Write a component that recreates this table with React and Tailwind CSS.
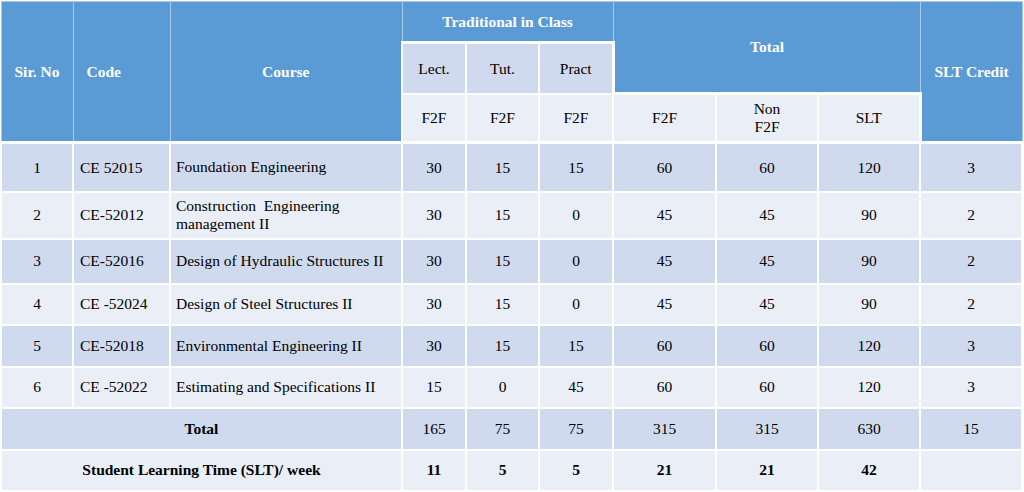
import React from 'react'

const COLS = [72, 97, 232, 64, 73, 74, 103, 102, 102, 102]

const ROWS = [
  { no: 1, code: 'CE 52015', course: 'Foundation Engineering', v: [30, 15, 15, 60, 60, 120, 3], h: 49 },
  { no: 2, code: 'CE-52012', course: ['Construction  Engineering', 'management II'], v: [30, 15, 0, 45, 45, 90, 2], h: 47 },
  { no: 3, code: 'CE-52016', course: 'Design of Hydraulic Structures II', v: [30, 15, 0, 45, 45, 90, 2], h: 45 },
  { no: 4, code: 'CE -52024', course: 'Design of Steel Structures II', v: [30, 15, 0, 45, 45, 90, 2], h: 41 },
  { no: 5, code: 'CE-52018', course: 'Environmental Engineering II', v: [30, 15, 15, 60, 60, 120, 3], h: 42 },
  { no: 6, code: 'CE -52022', course: 'Estimating and Specifications II', v: [15, 0, 45, 60, 60, 120, 3], h: 41 },
]

const dark = 'bg-[#cfdaee]'
const light = 'bg-[#e9eef7]'
const head = 'bg-[#5b9bd5] text-white font-bold'

export default function App() {
  return (
    <div className="w-[1024px] h-[492px] bg-white pt-[1px] text-[15.5px] text-black font-['Liberation_Serif','Times_New_Roman',serif]">
      <table className="table-fixed border-collapse w-[1021px]">
        <colgroup>
          {COLS.map((w, i) => <col key={i} style={{ width: w }} />)}
        </colgroup>
        <thead>
          <tr className="h-[41px]">
            <th rowSpan={3} className={`${head} border border-[#a9c8ea] text-center`}>Sir. No</th>
            <th rowSpan={3} className={`${head} border border-[#a9c8ea] text-left pl-[13px]`}>Code</th>
            <th rowSpan={3} className={`${head} border border-[#a9c8ea] text-center`}>Course</th>
            <th colSpan={3} className={`${head} border border-[#a9c8ea] text-center`}>Traditional in Class</th>
            <th colSpan={3} rowSpan={2} className={`${head} border border-[#a9c8ea] text-center`}>Total</th>
            <th rowSpan={3} className={`${head} border border-[#a9c8ea] text-center`}>SLT Credit</th>
          </tr>
          <tr className="h-[51px]">
            {['Lect.', 'Tut.', 'Pract'].map((t, i) => (
              <td key={t} className={`${dark} font-normal text-center border-white border-t-[3px] border-l-2 border-b-2 ${i === 2 ? 'border-r-[3px]' : 'border-r-2'}`}>{t}</td>
            ))}
          </tr>
          <tr className="h-[49px]">
            {['F2F', 'F2F', 'F2F'].map((t, i) => (
              <td key={i} className={`${light} text-center border-2 border-white`}>{t}</td>
            ))}
            <td className={`${light} text-center border-2 border-white border-t-[3px]`}>F2F</td>
            <td className={`${light} text-center border-2 border-white border-t-[3px] leading-[18px]`}>Non<br />F2F</td>
            <td className={`${light} text-center border-2 border-white border-t-[3px] border-r-[3px]`}>SLT</td>
          </tr>
        </thead>
        <tbody>
          {ROWS.map((r, idx) => {
            const bg = idx % 2 === 0 ? dark : light
            const top = idx === 0 ? 'border-t-[3px]' : ''
            return (
              <tr key={r.no} style={{ height: r.h }}>
                <td className={`${bg} border-2 border-white ${top} text-center`}>{r.no}</td>
                <td className={`${bg} border-2 border-white ${top} pl-[6px]`}>{r.code}</td>
                <td className={`${bg} border-2 border-white ${top} pl-[5px] leading-[18px]`}>
                  {Array.isArray(r.course) ? (
                    <>
                      <span className="whitespace-pre">{r.course[0]}</span>
                      <br />
                      {r.course[1]}
                    </>
                  ) : r.course}
                </td>
                {r.v.map((v, i) => (
                  <td key={i} className={`${bg} border-2 border-white ${top} text-center`}>{v}</td>
                ))}
              </tr>
            )
          })}
          <tr className="h-[42px]">
            <td colSpan={3} className={`${dark} border-2 border-white text-center font-bold`}>Total</td>
            {[165, 75, 75, 315, 315, 630, 15].map((v, i) => (
              <td key={i} className={`${dark} border-2 border-white text-center`}>{v}</td>
            ))}
          </tr>
          <tr className="h-[41px]">
            <td colSpan={3} className={`${light} border-2 border-white text-center font-bold`}>Student Learning Time (SLT)/ week</td>
            {[11, 5, 5, 21, 21, 42, ''].map((v, i) => (
              <td key={i} className={`${light} border-2 border-white text-center font-bold`}>{v}</td>
            ))}
          </tr>
        </tbody>
      </table>
    </div>
  )
}
